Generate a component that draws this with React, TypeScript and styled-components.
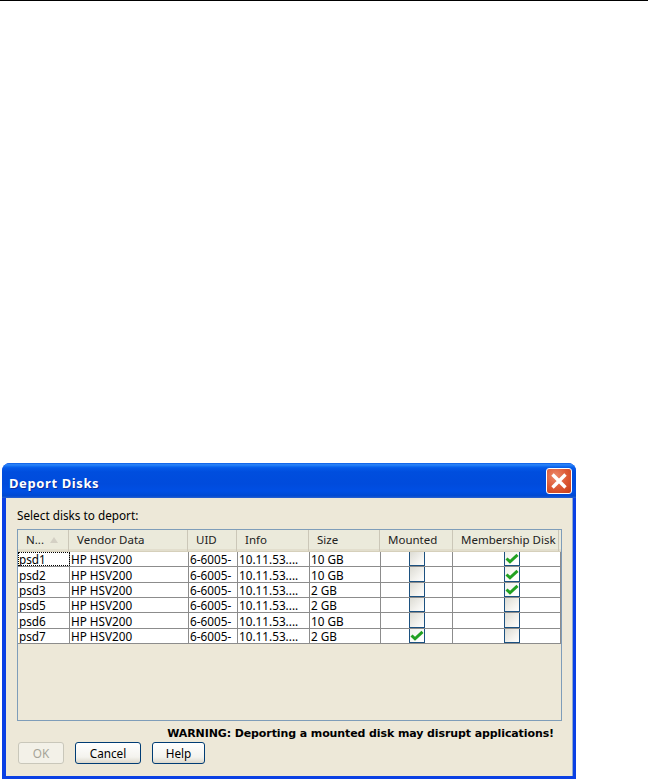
import styled, { createGlobalStyle } from "styled-components";

const GlobalStyle = createGlobalStyle`
  html, body {
    margin: 0;
    padding: 0;
    background: #ffffff;
  }
  body {
    font-family: "Noto Sans", "DejaVu Sans", sans-serif;
    font-size: 11.75px;
    color: #000000;
  }
`;

const Page = styled.div`
  display: flex;
  flex-direction: column;
  width: 648px;
  height: 779px;
  overflow: hidden;
`;

const TopRule = styled.div`
  height: 1px;
  background: #000000;
  margin-bottom: 462px;
`;

const Window = styled.div`
  display: flex;
  flex-direction: column;
  width: 574px;
  height: 316px;
  margin-left: 2px;
  box-sizing: border-box;
  border-radius: 8px 8px 0 0;
  background: #0a40e4;
  overflow: hidden;
`;

const TitleBar = styled.div`
  display: flex;
  align-items: center;
  justify-content: space-between;
  height: 35px;
  padding: 0 4px 0 7px;
  background: linear-gradient(
    180deg,
    #0a5ce6 0%,
    #2f86f8 5%,
    #1470f2 9%,
    #0559e8 14%,
    #004ede 25%,
    #004bdc 60%,
    #004fe4 80%,
    #0049d2 94%,
    #2a62d0 100%
  );
`;

const TitleText = styled.span`
  font-family: "Noto Sans", sans-serif;
  font-size: 13px;
  font-weight: 700;
  letter-spacing: 0.6px;
  padding-top: 4px;
  color: #ffffff;
  text-shadow: 1px 1px 0 #0b2f9e;
`;

const CloseButton = styled.div`
  display: flex;
  align-items: center;
  justify-content: center;
  width: 26px;
  height: 26px;
  box-sizing: border-box;
  border: 1px solid #ffffff;
  border-radius: 3px;
  background: radial-gradient(circle at 35% 30%, #ec8a6c 0%, #dd5a36 50%, #c73d18 100%);
`;

const Client = styled.div`
  display: flex;
  flex-direction: column;
  flex: 1;
  margin: 0 3px 3px 4px;
  padding: 11px 11px 0 11px;
  background: #ede8d8;
  border-right: 1px solid #8fa8cc;
`;

const Caption = styled.div`
  height: 20px;
  line-height: 13px;
`;

const TableFrame = styled.div`
  display: flex;
  flex-direction: column;
  width: 545px;
  height: 192px;
  box-sizing: border-box;
  border: 1px solid #7f9db9;
`;

const HeaderRow = styled.div`
  display: grid;
  grid-template-columns: 51px 119px 49px 72px 71px 73px 106px 2px;
  height: 22px;
  box-sizing: border-box;
  background: #ebeadb;
  border-bottom: 1px solid #d6d0bb;
  box-shadow: inset 0 -2px 0 #e2decd;
`;

const HeaderCell = styled.div`
  display: flex;
  align-items: center;
  gap: 6px;
  padding: 0 0 2px 8px;
  border-right: 1px solid #cbc7b8;
  font-size: 11.5px;
  color: #222222;
  white-space: nowrap;
`;

const SortArrow = styled.span`
  width: 0;
  height: 0;
  border-left: 4px solid transparent;
  border-right: 4px solid transparent;
  border-bottom: 6px solid #d4d0c4;
`;

const BodyRow = styled.div<{ $height: number }>`
  display: grid;
  grid-template-columns: 52px 119px 49px 72px 71px 72px 108px;
  height: ${(p) => p.$height}px;
  box-sizing: border-box;
  background: #ffffff;
  border-bottom: 1px solid #8c8c8c;
`;

const Cell = styled.div<{ $focused?: boolean }>`
  display: flex;
  align-items: center;
  box-sizing: border-box;
  padding-left: 1px;
  border-right: 1px solid #8c8c8c;
  white-space: nowrap;
  overflow: hidden;
  outline: ${(p) => (p.$focused ? "1px dotted #000000" : "none")};
  outline-offset: -1px;
`;

const CheckCell = styled.div<{ $offset: number }>`
  display: flex;
  box-sizing: border-box;
  padding-left: ${(p) => p.$offset}px;
  border-right: 1px solid #8c8c8c;
`;

const CheckBox = styled.div<{ $checked?: boolean }>`
  display: flex;
  align-items: center;
  justify-content: center;
  width: 16px;
  box-sizing: border-box;
  border: 1px solid #1c5180;
  border-top: none;
  background: ${(p) =>
    p.$checked
      ? "linear-gradient(135deg, #f2f1ea 0%, #ffffff 80%)"
      : "linear-gradient(135deg, #dcdbd3 0%, #f3f2ee 60%, #ffffff 100%)"};
`;

const Warning = styled.div`
  margin: 6px 7px 0 0;
  height: 14px;
  line-height: 14px;
  text-align: right;
  font-family: "DejaVu Sans", sans-serif;
  font-size: 11px;
  font-weight: 700;
  letter-spacing: -0.1px;
`;

const ButtonRow = styled.div`
  display: flex;
  gap: 11px;
  margin: 1px 0 0 1px;
`;

const Button = styled.div<{ $width: number; $disabled?: boolean }>`
  display: flex;
  align-items: center;
  justify-content: center;
  width: ${(p) => p.$width}px;
  height: 22px;
  box-sizing: border-box;
  border-radius: 3px;
  border: 1px solid ${(p) => (p.$disabled ? "#c9c7ba" : "#003c74")};
  color: ${(p) => (p.$disabled ? "#a6a498" : "#000000")};
  background: ${(p) =>
    p.$disabled ? "#f3f1e8" : "linear-gradient(180deg, #ffffff 0%, #f4f3ee 70%, #dcd8cc 100%)"};
`;

type Disk = {
  name: string;
  size: string;
  mounted: boolean;
  member: boolean;
  height: number;
};

const disks: Disk[] = [
  { name: "psd1", size: "10 GB", mounted: false, member: true, height: 15 },
  { name: "psd2", size: "10 GB", mounted: false, member: true, height: 16 },
  { name: "psd3", size: "2 GB", mounted: false, member: true, height: 15 },
  { name: "psd5", size: "2 GB", mounted: false, member: false, height: 15 },
  { name: "psd6", size: "10 GB", mounted: false, member: false, height: 16 },
  { name: "psd7", size: "2 GB", mounted: true, member: false, height: 15 },
];

function Check() {
  return (
    <svg width="14" height="11" viewBox="0 0 14 11">
      <path d="M1.5 5.5 L5 8.8 L12.5 1.8" fill="none" stroke="#21a121" strokeWidth="3" />
    </svg>
  );
}

export default function App() {
  return (
    <Page>
      <GlobalStyle />
      <TopRule />
      <Window>
        <TitleBar>
          <TitleText>Deport Disks</TitleText>
          <CloseButton>
            <svg width="18" height="18" viewBox="0 0 18 18">
              <path d="M2.5 2.5 L15.5 15.5 M15.5 2.5 L2.5 15.5" stroke="#ffffff" strokeWidth="3.4" />
            </svg>
          </CloseButton>
        </TitleBar>
        <Client>
          <Caption>Select disks to deport:</Caption>
          <TableFrame>
            <HeaderRow>
              <HeaderCell>
                N...
                <SortArrow />
              </HeaderCell>
              <HeaderCell>Vendor Data</HeaderCell>
              <HeaderCell>UID</HeaderCell>
              <HeaderCell>Info</HeaderCell>
              <HeaderCell>Size</HeaderCell>
              <HeaderCell>Mounted</HeaderCell>
              <HeaderCell>Membership Disk</HeaderCell>
            </HeaderRow>
            {disks.map((disk, i) => (
              <BodyRow key={disk.name} $height={disk.height}>
                <Cell $focused={i === 0}>{disk.name}</Cell>
                <Cell>HP HSV200</Cell>
                <Cell>6-6005-</Cell>
                <Cell>10.11.53....</Cell>
                <Cell>{disk.size}</Cell>
                <CheckCell $offset={28}>
                  <CheckBox $checked={disk.mounted}>{disk.mounted && <Check />}</CheckBox>
                </CheckCell>
                <CheckCell $offset={51}>
                  <CheckBox $checked={disk.member}>{disk.member && <Check />}</CheckBox>
                </CheckCell>
              </BodyRow>
            ))}
          </TableFrame>
          <Warning>WARNING: Deporting a mounted disk may disrupt applications!</Warning>
          <ButtonRow>
            <Button $width={46} $disabled>
              OK
            </Button>
            <Button $width={66}>Cancel</Button>
            <Button $width={53}>Help</Button>
          </ButtonRow>
        </Client>
      </Window>
    </Page>
  );
}
